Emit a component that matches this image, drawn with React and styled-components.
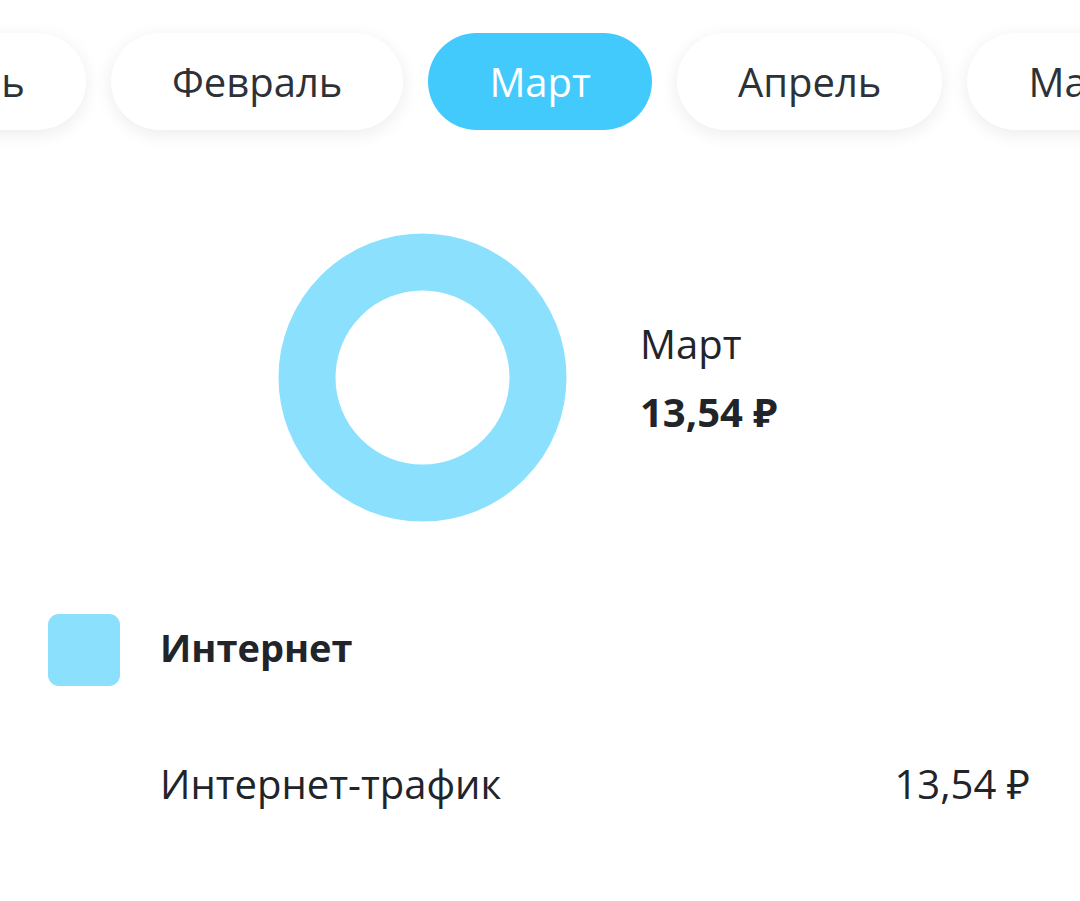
import React, { useLayoutEffect, useRef } from "react";
import styled, { createGlobalStyle } from "styled-components";

const Global = createGlobalStyle`
  html, body { margin: 0; padding: 0; background: #ffffff; }
  body { font-family: "Open Sans", "Noto Sans", sans-serif; color: #212429; }
`;

const Page = styled.div`
  width: 1080px;
  height: 901px;
  overflow: hidden;
  background: #ffffff;
`;

const TabsStrip = styled.div`
  display: flex;
  gap: 25px;
  padding: 33px 0 30px;
  overflow-x: auto;
  scrollbar-width: none;
  &::-webkit-scrollbar { display: none; }
`;

const Tab = styled.div`
  flex: 0 0 auto;
  height: 97px;
  padding: 0 61px;
  border-radius: 49px;
  display: flex;
  align-items: center;
  font-size: 40px;
  background: ${(p) => (p.$active ? "#43cafd" : "#ffffff")};
  color: ${(p) => (p.$active ? "#ffffff" : "#2d3138")};
  box-shadow: ${(p) =>
    p.$active ? "none" : "0 4px 18px rgba(0, 0, 0, 0.08)"};
`;

const ChartSection = styled.div`
  display: flex;
  align-items: center;
  gap: 73px;
  padding-left: 278px;
  margin-top: 73px;
`;

const Summary = styled.div`
  display: flex;
  flex-direction: column;
  gap: 14px;
`;

const SummaryMonth = styled.div`
  font-size: 40px;
  line-height: 54px;
`;

const SummaryTotal = styled.div`
  font-size: 40px;
  line-height: 54px;
  font-weight: 700;
`;

const Legend = styled.div`
  display: flex;
  align-items: center;
  gap: 40px;
  padding-left: 48px;
  margin-top: 92px;
`;

const Swatch = styled.div`
  width: 72px;
  height: 72px;
  border-radius: 11px;
  background: ${(p) => p.$color};
`;

const LegendTitle = styled.div`
  font-size: 38px;
  font-weight: 700;
  margin-top: -6px;
`;

const DetailRow = styled.div`
  display: flex;
  justify-content: space-between;
  align-items: center;
  padding: 0 50px 0 160px;
  margin-top: 71px;
  font-size: 40px;
  line-height: 54px;
`;

const months = ["Январь", "Февраль", "Март", "Апрель", "Май", "Июнь"];
const ACTIVE = "Март";

function Donut({ color }) {
  return (
    <svg width="289" height="289" viewBox="0 0 289 289">
      <circle cx="144.5" cy="144.5" r="115.5" fill="none" stroke={color} strokeWidth="57" />
    </svg>
  );
}

export default function App() {
  const stripRef = useRef(null);
  const activeRef = useRef(null);

  useLayoutEffect(() => {
    const strip = stripRef.current;
    const el = activeRef.current;
    if (strip && el) {
      strip.scrollLeft = el.offsetLeft + el.offsetWidth / 2 - strip.clientWidth / 2;
    }
  }, []);

  return (
    <Page>
      <Global />
      <TabsStrip ref={stripRef}>
        {months.map((m) => (
          <Tab key={m} $active={m === ACTIVE} ref={m === ACTIVE ? activeRef : null}>
            {m}
          </Tab>
        ))}
      </TabsStrip>
      <ChartSection>
        <Donut color="#8be0fd" />
        <Summary>
          <SummaryMonth>Март</SummaryMonth>
          <SummaryTotal>13,54 ₽</SummaryTotal>
        </Summary>
      </ChartSection>
      <Legend>
        <Swatch $color="#8be0fd" />
        <LegendTitle>Интернет</LegendTitle>
      </Legend>
      <DetailRow>
        <span>Интернет-трафик</span>
        <span>13,54 ₽</span>
      </DetailRow>
    </Page>
  );
}
